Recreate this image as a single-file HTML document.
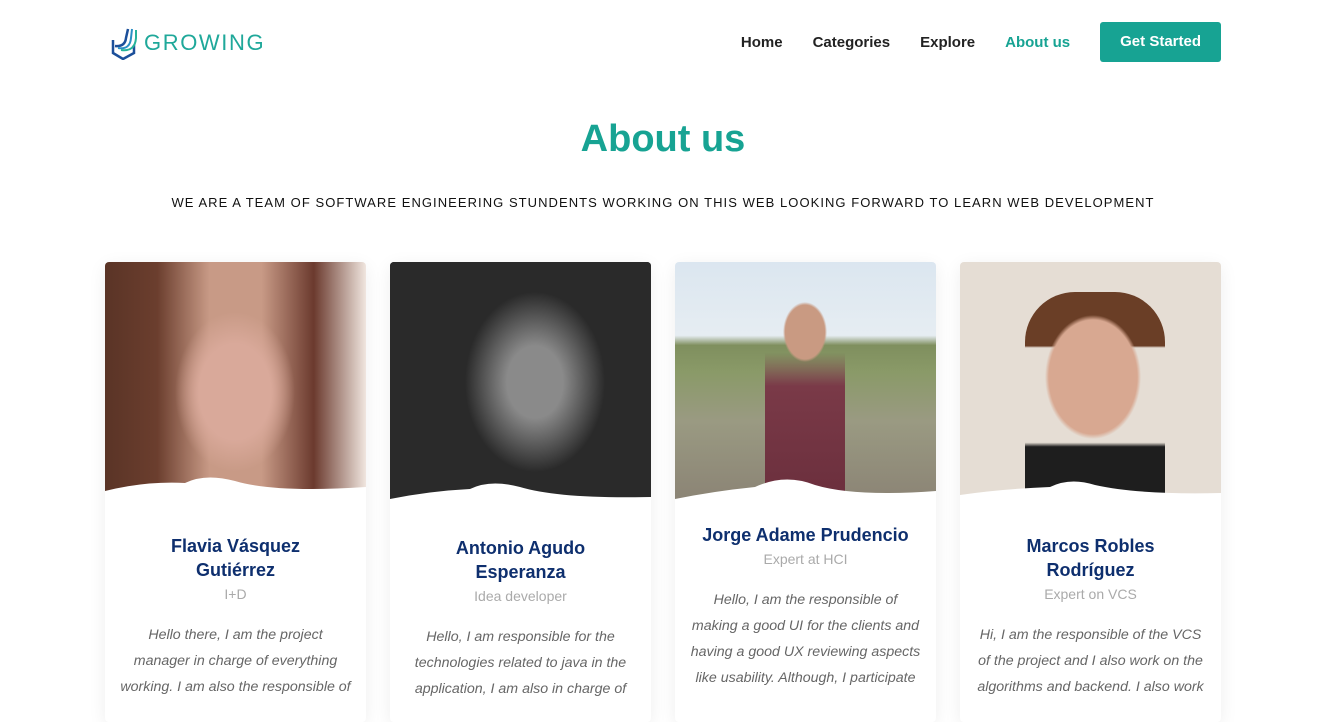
<!DOCTYPE html>
<html><head><meta charset="utf-8"><style>
*{margin:0;padding:0;box-sizing:border-box}
body{width:1326px;height:696px;overflow:hidden;background:#fff;font-family:"Liberation Sans",sans-serif;position:relative}
.logo{position:absolute;left:111px;top:26px;display:flex;align-items:center}
.logo span{color:#1fa89a;font-size:22px;letter-spacing:1.6px;margin-left:3px;font-weight:normal}
nav{position:absolute;top:22px;right:105px;display:flex;align-items:center}
nav a{font-size:15px;color:#222;margin-left:30px;font-weight:bold;text-decoration:none}
nav a.act{color:#17a393}
nav .btn{background:#17a393;color:#fff;padding:0 20px;height:40px;line-height:40px;border-radius:3px;margin-left:30px}
h1{position:absolute;top:118px;width:100%;text-align:center;color:#17a393;font-size:38px;font-weight:bold}
.sub{position:absolute;top:195px;width:100%;text-align:center;font-size:13px;letter-spacing:1.05px;color:#111}
.card{position:absolute;top:262px;width:261px;height:460px;background:#fff;border-radius:4px;box-shadow:0 4px 18px rgba(0,0,0,0.07);overflow:hidden;text-align:center}
.ph{height:245px;position:relative}
.ph svg{position:absolute;left:0;bottom:0}
.nm{color:#0e2f6e;font-size:18px;font-weight:bold;line-height:24px;padding:0 26px}
.role{color:#aaa;font-size:14px;margin-top:4px}
.d{color:#666;font-style:italic;font-size:14.2px;line-height:26px;margin-top:20px;padding:0 13px}
</style></head><body>
<div class="logo"><svg width="30" height="34" viewBox="0 0 30 34"><path d="M2 14 L2 27 L12 33 L23 27 L23 19" stroke="#1b4f9a" stroke-width="2.5" fill="none"/><path d="M4 20 Q14 21 15 12 L17 3" stroke="#1b4f9a" stroke-width="2.5" fill="none"/><path d="M7 22 Q19 24 20 12 L21 3" stroke="#2a8fc4" stroke-width="2" fill="none"/><path d="M10 24 Q24 26 25 12 L25 4" stroke="#25b39a" stroke-width="2" fill="none"/></svg><span>GROWING</span></div>
<nav><a>Home</a><a>Categories</a><a>Explore</a><a class="act">About us</a><a class="btn">Get Started</a></nav>
<h1>About us</h1>
<div class="sub">WE ARE A TEAM OF SOFTWARE ENGINEERING STUNDENTS WORKING ON THIS WEB LOOKING FORWARD TO LEARN WEB DEVELOPMENT</div>

<div class="card" style="left:105px"><div class="ph" style="background:radial-gradient(ellipse 60px 80px at 130px 130px,#d9a99a 60%,transparent 100%),linear-gradient(90deg,#5a3426 0%,#6b3e2e 20%,#c89a86 40%,#c89a86 60%,#6b3a2e 80%,#f0e6df 100%)"><svg width="261" height="30" viewBox="0 0 261 30"><path d="M0 14 Q40 4 80 6 Q100 -4 130 4 Q170 16 261 10 L261 30 L0 30Z" fill="#fff"/></svg></div>
<div class="nm" style="margin-top:27px">Flavia Vásquez Gutiérrez</div><div class="role">I+D</div><div class="d">Hello there, I am the project<br>manager in charge of everything working. I am also the responsible of</div></div>

<div class="card" style="left:390px"><div class="ph" style="background:radial-gradient(ellipse 70px 90px at 145px 120px,#8a8a8a 40%,#2a2a2a 100%),#1e1e1e"><svg width="261" height="30" viewBox="0 0 261 30"><path d="M0 22 Q40 14 80 12 Q100 2 130 10 Q170 22 261 20 L261 30 L0 30Z" fill="#fff"/></svg></div>
<div class="nm" style="margin-top:29px">Antonio Agudo Esperanza</div><div class="role">Idea developer</div><div class="d">Hello, I am responsible for the technologies related to java in the application, I am also in charge of</div></div>

<div class="card" style="left:675px"><div class="ph" style="background:linear-gradient(180deg,#dbe6f0 0%,#e6edf2 30%,#7f8f5e 34%,#8a9a68 45%,#9a9a82 65%,#8a8274 100%)"><div style="position:absolute;left:90px;top:25px;width:80px;height:220px;background:radial-gradient(ellipse 22px 30px at 40px 45px,#c99a82 90%,transparent),linear-gradient(180deg,transparent 30%,#7a3a48 45%,#6a2e3c 100%);border-radius:30px 30px 0 0"></div><svg width="261" height="40" viewBox="0 0 261 40"><path d="M0 32 Q40 24 80 20 Q110 6 140 18 Q180 30 261 24 L261 40 L0 40Z" fill="#fff"/></svg></div>
<div class="nm" style="margin-top:16px;padding:0 5px;white-space:nowrap">Jorge Adame Prudencio</div><div class="role">Expert at HCI</div><div class="d">Hello, I am the responsible of<br>making a good UI for the clients and having a good UX reviewing aspects like usability. Although, I participate</div></div>

<div class="card" style="left:960px"><div class="ph" style="background:#e5ddd4"><div style="position:absolute;left:65px;top:30px;width:140px;height:215px;background:radial-gradient(ellipse 48px 62px at 68px 85px,#d8a891 92%,transparent),linear-gradient(180deg,#6a3e26 0%,#6a3e26 25%,transparent 26%,transparent 70%,#1e1e1e 72%);border-radius:50px 50px 0 0"></div><svg width="261" height="30" viewBox="0 0 261 30"><path d="M0 18 Q40 12 90 10 Q110 0 135 8 Q180 18 261 16 L261 30 L0 30Z" fill="#fff"/></svg></div>
<div class="nm" style="margin-top:27px">Marcos Robles Rodríguez</div><div class="role">Expert on VCS</div><div class="d">Hi, I am the responsible of the VCS of the project and I also work on the algorithms and backend. I also work</div></div>
</body></html>
